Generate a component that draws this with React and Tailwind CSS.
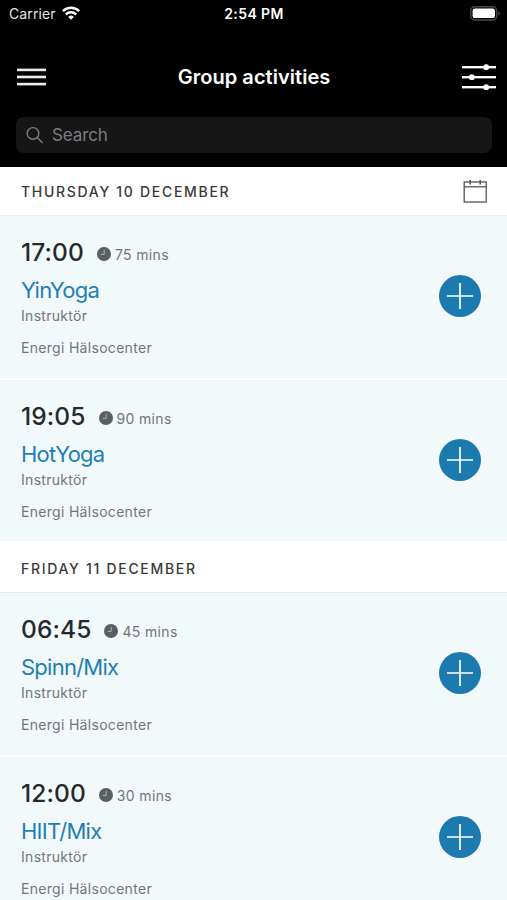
import React from 'react';

const days = [
    {
        label: 'THURSDAY 10 DECEMBER',
        headerClass: 'h-[49px] pt-px',
        showCalendar: true,
        classes: [
            { time: '17:00', duration: '75 mins', name: 'YinYoga' },
            { time: '19:05', duration: '90 mins', name: 'HotYoga' },
        ],
    },
    {
        label: 'FRIDAY 11 DECEMBER',
        headerClass: 'h-[52px] pt-[3px]',
        showCalendar: false,
        classes: [
            { time: '06:45', duration: '45 mins', name: 'Spinn/Mix' },
            { time: '12:00', duration: '30 mins', name: 'HIIT/Mix' },
        ],
    },
];

const WifiIcon = () => (
    <svg width="18" height="14" viewBox="0 0 18 14" fill="none" stroke="#fff" strokeWidth="2.5">
        <path d="M0.9 5.1a11.5 11.5 0 0 1 16.2 0" />
        <path d="M3.8 8.5a7.4 7.4 0 0 1 10.4 0" />
        <path d="M9 13.8 6.2 10.9a4 4 0 0 1 5.6 0z" fill="#fff" stroke="none" />
    </svg>
);

const BatteryIcon = () => (
    <svg width="31" height="15" viewBox="0 0 31 15">
        <rect x="0.75" y="0.75" width="26" height="13.2" rx="4" fill="none" stroke="#48484a" strokeWidth="1.4" />
        <rect x="2.6" y="2.6" width="22.4" height="9.5" rx="2.2" fill="#fff" />
        <path d="M28.4 5.2c2 .6 2 3.8 0 4.4z" fill="#48484a" />
    </svg>
);

const FilterIcon = () => (
    <svg width="34" height="28" viewBox="0 0 34 28" fill="#fff">
        <rect x="0" y="3" width="34" height="2.4" />
        <rect x="0" y="13" width="34" height="2.4" />
        <rect x="0" y="23" width="34" height="2.4" />
        <circle cx="24.2" cy="4.2" r="2.9" />
        <circle cx="9.8" cy="14.2" r="2.9" />
        <circle cx="24.2" cy="24.2" r="2.9" />
    </svg>
);

const MenuIcon = () => (
    <svg width="29" height="18" viewBox="0 0 29 18" fill="#ececec">
        <rect x="0" y="0.6" width="29" height="2.6" />
        <rect x="0" y="7.7" width="29" height="2.6" />
        <rect x="0" y="14.8" width="29" height="2.6" />
    </svg>
);

const SearchIcon = () => (
    <svg width="18" height="18" viewBox="0 0 18 18" fill="none" stroke="#7d7d80" strokeWidth="1.4">
        <circle cx="7" cy="7.4" r="5.8" />
        <path d="M11.2 11.6 16.6 17" />
    </svg>
);

const CalendarIcon = () => (
    <svg width="24" height="24" viewBox="0 0 24 24" fill="none" stroke="#555" strokeWidth="1.3">
        <rect x="1.2" y="2" width="22" height="20" />
        <path d="M1.2 6.8h22" />
        <path d="M7.2 0v4.4M17.2 0v4.4" strokeWidth="1.6" />
    </svg>
);

const ClockIcon = () => (
    <svg width="14" height="14" viewBox="0 0 14 14">
        <circle cx="7" cy="7" r="7" fill="#5c5f61" />
        <path d="M7.2 2.8v4.6H3.8" fill="none" stroke="#b9bdbf" strokeWidth="0.9" />
    </svg>
);

const ActivityCard = ({ activity }) => (
    <div className="flex h-[161px] items-start justify-between bg-[#f2f9fb] pt-[18px] pr-[26px] pl-[21px] first:h-[162px]">
        <div>
            <div className="flex h-9 items-center">
                <span className="text-[24.5px] font-[550] tracking-[0.1px] text-[#26292b]">{activity.time}</span>
                <span className="mt-[3px] ml-[13px] flex items-center gap-1 text-[14px] tracking-[0.35px] text-[#737678]">
                    <ClockIcon />
                    <span className="mt-0.5">{activity.duration}</span>
                </span>
            </div>
            <div className="mt-1 h-8 text-[22px] leading-[33px] tracking-[-0.75px] text-[#1f7fb3]">{activity.name}</div>
            <div className="h-5 text-[14px] leading-5 tracking-[0.3px] text-[#737678]">Instruktör</div>
            <div className="mt-3 h-5 text-[14px] leading-5 tracking-[0.3px] text-[#737678]">Energi Hälsocenter</div>
        </div>
        <button className="mt-[41px] flex size-[42px] items-center justify-center rounded-full bg-[#1c7aae]">
            <svg width="26" height="26" viewBox="0 0 26 26" stroke="#fff" strokeWidth="1.7">
                <path d="M13 0v26M0 13h26" />
            </svg>
        </button>
    </div>
);

const App = () => {
    return (
        <div className="h-[900px] w-[507px] overflow-hidden bg-white font-['Inter',sans-serif]">
            <header className="h-[167px] bg-black text-white">
                <div className="grid h-[27px] grid-cols-3 items-center pr-[6px] pl-[9px]">
                    <div className="flex items-center gap-1.5">
                        <span className="text-[14px] tracking-[0.1px] text-[#e4e4e4]">Carrier</span>
                        <span className="-mt-0.5">
                            <WifiIcon />
                        </span>
                    </div>
                    <span className="pr-[2px] text-center text-[14px] font-semibold tracking-[0.4px]">2:54 PM</span>
                    <span className="flex justify-end">
                        <BatteryIcon />
                    </span>
                </div>
                <div className="mt-[29px] flex h-[42px] items-center justify-between pr-[11px] pl-[17px]">
                    <button className="w-[29px]">
                        <MenuIcon />
                    </button>
                    <h1 className="text-[20px] font-semibold tracking-[0.05px]">Group activities</h1>
                    <FilterIcon />
                </div>
                <div className="mr-[15px] ml-4 mt-[19px] flex h-9 items-center gap-2 rounded-lg bg-[#161616] pl-[10px] text-[17px] tracking-[-0.1px] text-[#7d7d80]">
                    <SearchIcon />
                    <span className="mt-0.5">Search</span>
                </div>
            </header>

            {days.map(day => (
                <section key={day.label}>
                    <div className={`flex items-center justify-between border-b border-[#e6ebed] bg-white pr-5 pl-[21px] ${day.headerClass}`}>
                        <h2 className="text-[14px] font-medium tracking-[1.7px] text-[#3a3a3a]">{day.label}</h2>
                        {day.showCalendar && <CalendarIcon />}
                    </div>
                    <div className="flex flex-col gap-[2px]">
                        {day.classes.map(activity => (
                            <ActivityCard key={activity.time} activity={activity} />
                        ))}
                    </div>
                </section>
            ))}
        </div>
    );
};

export default App;
